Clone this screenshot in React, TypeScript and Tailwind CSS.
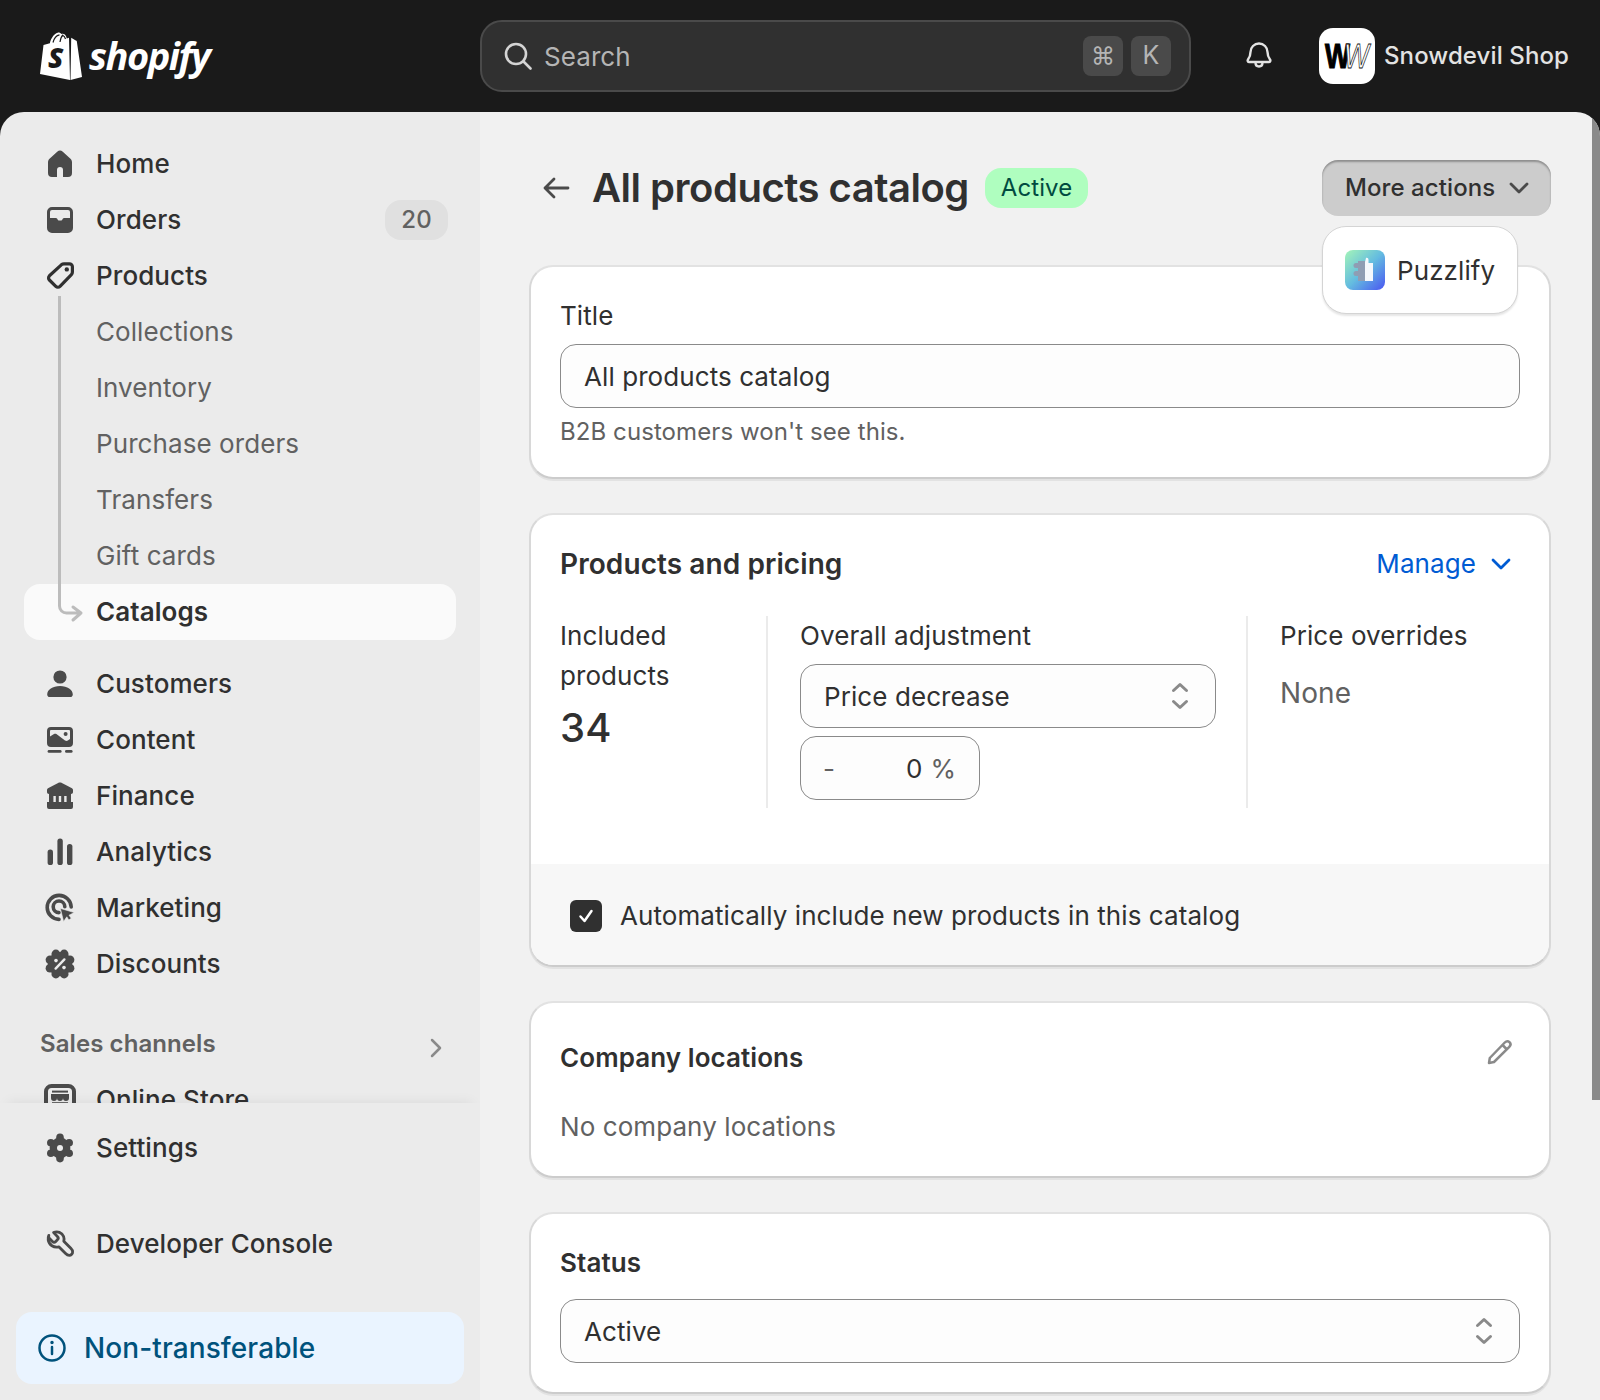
import type { ReactNode } from "react";

const font = { fontFamily: "Inter, 'Liberation Sans', sans-serif" };

function Icon({ children, className = "" }: { children: ReactNode; className?: string }) {
  return (
    <svg viewBox="0 0 20 20" className={`h-10 w-10 shrink-0 ${className}`} fill="#4a4a4a">
      {children}
    </svg>
  );
}

const HomeIcon = () => (
  <Icon>
    <path d="M4 9.200c0-.8.300-1.500.9-2l3.700-3.300a2 2 0 0 1 2.800 0l3.700 3.300c.6.500.9 1.200.9 2v5.300a2 2 0 0 1-2 2h-2.500V13a1.500 1.500 0 0 0-3 0v3.500H6a2 2 0 0 1-2-2z" />
  </Icon>
);

const OrdersIcon = () => (
  <Icon>
    <path
      fillRule="evenodd"
      d="M6 3.500h8A2.500 2.500 0 0 1 16.500 6v8a2.500 2.500 0 0 1-2.500 2.500H6A2.500 2.500 0 0 1 3.500 14V6A2.500 2.500 0 0 1 6 3.500zM6 5a1 1 0 0 0-1 1v3h2.800c.5 0 .8.300 1 .700.2.400.6.600 1.200.600s1-.2 1.200-.6c.2-.4.500-.7 1-.7H15V6a1 1 0 0 0-1-1z"
    />
  </Icon>
);

const ProductsIcon = () => (
  <Icon>
    <path
      d="M10.800 4.300Q11.300 3.900 12 3.900L14.700 3.900A1.500 1.500 0 0 1 16.200 5.400L16.200 8Q16.200 8.800 15.700 9.300L10 15.200A1.500 1.500 0 0 1 7.900 15.200L4.700 12A1.500 1.500 0 0 1 4.700 9.900Z"
      fill="none"
      stroke="#303030"
      strokeWidth="1.600"
      strokeLinejoin="round"
    />
    <circle cx="13.400" cy="6.700" r="1.100" fill="#303030" />
  </Icon>
);

const CustomersIcon = () => (
  <Icon>
    <circle cx="10" cy="6.500" r="3.300" />
    <path d="M3.600 15.200c0-2.400 2.700-4.200 6.400-4.200s6.400 1.800 6.400 4.200c0 .7-.5 1.300-1.200 1.300H4.800c-.7 0-1.200-.6-1.200-1.300z" />
  </Icon>
);

const ContentIcon = () => (
  <Icon>
    <path
      fillRule="evenodd"
      d="M5.500 3.500h9a2 2 0 0 1 2 2v6a2 2 0 0 1-2 2h-9a2 2 0 0 1-2-2v-6a2 2 0 0 1 2-2zM5 8.200l2-1.200c.4-.2.800-.2 1.200 0l4.300 3.200c.5.300 1 .3 1.400.1l1.100-.8V5.500a.5.500 0 0 0-.5-.5h-9a.5.500 0 0 0-.5.500z"
    />
    <circle cx="12.800" cy="7" r="1" />
    <rect x="3.800" y="15" width="7" height="1.400" rx=".7" />
    <rect x="12.500" y="15" width="3.800" height="1.400" rx=".7" />
  </Icon>
);

const FinanceIcon = () => (
  <Icon>
    <path d="M9.300 3.400c.4-.2 1-.2 1.400 0l5.300 2.700c.3.200.5.500.5.900v1c0 .6-.4 1-1 1H4.500c-.6 0-1-.4-1-1V7c0-.4.200-.7.500-.9z" />
    <path
      fillRule="evenodd"
      d="M4.500 8.500h11v4.500h1v2.500a1 1 0 0 1-1 1h-11a1 1 0 0 1-1-1V13h1zM6.700 10v3h1.200v-3zM9.400 10v3h1.200v-3zM12.100 10v3h1.200v-3z"
    />
  </Icon>
);

const AnalyticsIcon = () => (
  <Icon>
    <rect x="3.800" y="8.800" width="2.700" height="7.700" rx="1.300" />
    <rect x="8.700" y="3.300" width="2.700" height="13.200" rx="1.300" />
    <rect x="13.500" y="6" width="2.700" height="10.500" rx="1.300" />
  </Icon>
);

const MarketingIcon = () => (
  <Icon>
    <path
      d="M9.500 15.700a6 6 0 1 1 6.100-6.200M9.500 12.300a2.900 2.900 0 1 1 2.900-2.900"
      fill="none"
      stroke="#4a4a4a"
      strokeWidth="1.800"
      strokeLinecap="round"
    />
    <path d="M10.200 10.200l6.900 2.100-2.600 1.300 1.100 1.500-1.200.9-1-1.600-1.600 2.400z" stroke="#ebebeb" strokeWidth=".3" />
  </Icon>
);

const DiscountsIcon = () => (
  <Icon>
    {[0, 45, 90, 135, 180, 225, 270, 315].map((angle) => (
      <circle
        key={angle}
        cx={10 + 5.4 * Math.cos((angle * Math.PI) / 180 + Math.PI / 8)}
        cy={10 + 5.4 * Math.sin((angle * Math.PI) / 180 + Math.PI / 8)}
        r="2.200"
      />
    ))}
    <circle cx="10" cy="10" r="6" />
    <path d="M7.800 12.300l4.400-4.600" stroke="#ebebeb" strokeWidth="1.200" strokeLinecap="round" />
    <circle cx="8" cy="8.300" r=".9" fill="#ebebeb" />
    <circle cx="12" cy="11.800" r=".9" fill="#ebebeb" />
  </Icon>
);

const OnlineStoreIcon = () => (
  <Icon>
    <rect x="3" y="3" width="14" height="14" rx="2.800" fill="none" stroke="#4a4a4a" strokeWidth="2" />
    <path d="M5.500 7h9v2a1.500 1.500 0 0 1-3 0 1.500 1.500 0 0 1-3 0 1.500 1.500 0 0 1-3 0z" />
    <path d="M6 5.800h8" stroke="#4a4a4a" strokeWidth="1" />
    <path d="M6 11.800h8" stroke="#4a4a4a" strokeWidth="1.400" />
  </Icon>
);

const SettingsIcon = () => (
  <Icon>
    {[30, 90, 150, 210, 270, 330].map((angle) => (
      <circle key={angle} cx={10 + 5.3 * Math.cos((angle * Math.PI) / 180)} cy={10 + 5.3 * Math.sin((angle * Math.PI) / 180)} r="1.900" />
    ))}
    <circle cx="10" cy="10" r="5.200" />
    <circle cx="10" cy="10" r="1.500" fill="#ebebeb" />
  </Icon>
);

const WrenchIcon = () => (
  <Icon>
    <path
      d="M4.300 6.800 6.200 8.700c.5.500 1.200.5 1.700 0l.8-.8c.5-.5.5-1.200 0-1.700L6.800 4.300c1.900-.9 4.200-.1 5 1.900.3.800.3 1.600.1 2.400l3.500 3.500c.5.500.9 1.100.9 1.800a1.700 1.700 0 0 1-1.700 1.800c-.7 0-1.300-.4-1.800-.9l-3.400-3.400c-2.500.6-4.900-.9-5.300-3.400-.1-.8 0-1.600.3-2.300z"
      fill="none"
      stroke="#4a4a4a"
      strokeWidth="1.400"
      strokeLinejoin="round"
    />
  </Icon>
);

function Updown() {
  return (
    <svg viewBox="0 0 20 30" className="h-[30px] w-5" fill="none" stroke="#8a8a8a" strokeWidth="3" strokeLinecap="round" strokeLinejoin="round">
      <path d="M3.500 9.500 10 3.500l6.500 6M3.500 20.500l6.500 6 6.500-6" />
    </svg>
  );
}

function NavRow({ icon, label, right, active, muted, className = "" }: { icon?: ReactNode; label: string; right?: ReactNode; active?: boolean; muted?: boolean; className?: string }) {
  return (
    <div className={`mx-6 flex h-14 items-center gap-4 rounded-2xl pl-4 pr-2 text-[26px] tracking-[0.08px] ${active ? "bg-[#fafafa] font-semibold text-[#303030]" : muted ? "font-normal text-[#616161]" : "font-medium text-[#303030]"} ${className}`}>
      <div className="h-10 w-10 shrink-0">{icon}</div>
      <span className="flex-1 pb-0.5">{label}</span>
      {right}
    </div>
  );
}

function Logo() {
  return (
    <div className="flex items-center gap-[7px]">
      <svg viewBox="0 0 42 48" className="h-12 w-[42px]">
        <path d="M29 5.800 26.800 6.400C26 3 24.400 1.800 22.500 1.800c-.4 0-.8.100-1.200.300C20.300.700 19 .3 17.700.7 13.800 1.800 10.800 6.600 9.900 11.200L3.500 13.100 0 42l30 6z" fill="#fff" />
        <path d="M31.200 5.700 30.500 48l11.500-3L36.800 9.300c-.1-.5-.5-.8-1-.8z" fill="#fff" />
        <path d="M13 10.500C14 6.500 16.500 3.300 19.500 2.800M20 10c.5-3.500 1.800-6 3.200-7.200M25.500 7C25 5 24 3.800 22.800 3.500" fill="none" stroke="#1a1a1a" strokeWidth="1.200" />
        <text x="8" y="36" fontFamily="'Open Sans', sans-serif" fontSize="28" fontWeight="800" fontStyle="italic" fill="#1a1a1a">S</text>
      </svg>
      <span className="-mt-0.5 text-[38px] font-bold italic leading-none tracking-[-1.5px] text-white" style={{ fontFamily: "'Open Sans', sans-serif" }}>
        shopify
      </span>
    </div>
  );
}

function ShopMark() {
  return (
    <svg viewBox="0 0 56 56" className="h-14 w-14 shrink-0 rounded-[14px] bg-white">
      <text x="6" y="40" textLength="25" lengthAdjust="spacingAndGlyphs" fontFamily="'Liberation Sans', sans-serif" fontSize="35" fontWeight="900" fill="#000" stroke="#000" strokeWidth="1.200">W</text>
      <text x="25" y="40" textLength="25" lengthAdjust="spacingAndGlyphs" fontFamily="'Liberation Sans', sans-serif" fontSize="35" fontStyle="italic" fill="#fff" stroke="#111" strokeWidth=".8">W</text>
    </svg>
  );
}

function Puzzlify() {
  return (
    <svg viewBox="0 0 40 40" className="h-10 w-10 shrink-0 rounded-lg">
      <defs>
        <linearGradient id="pz" x1="0" y1="0" x2="1" y2="1">
          <stop offset="0" stopColor="#a4f5b8" />
          <stop offset=".5" stopColor="#64bce0" />
          <stop offset="1" stopColor="#4a55f2" />
        </linearGradient>
      </defs>
      <rect width="40" height="40" fill="url(#pz)" />
      <path d="M13 11h7v20h-7v-5h-2a2.500 2.500 0 0 1 0-5h2v-3h-2a2.500 2.500 0 0 1 0-5h2z" fill="#8f9db3" />
      <path d="M20 12l1-4c1.500-.5 2.500.5 2.500 2v3H28v18h-8z" fill="#f5f8fc" />
    </svg>
  );
}

function Card({ children, className = "" }: { children: ReactNode; className?: string }) {
  return <section className={`overflow-hidden rounded-3xl border-2 border-[#d8d8d8] border-t-[#e2e2e2] border-b-[#cccccc] bg-white shadow-[0_2px_0_rgba(0,0,0,0.06)] ${className}`}>{children}</section>;
}

function Sidebar() {
  return (
    <aside className="flex w-[480px] shrink-0 flex-col overflow-hidden rounded-tl-3xl bg-[#ebebeb]">
      <div className="h-[991px] overflow-hidden pt-6">
        <NavRow icon={<HomeIcon />} label="Home" />
        <NavRow
          icon={<OrdersIcon />}
          label="Orders"
          right={<span className="flex h-10 w-[63px] items-center justify-center rounded-2xl bg-[#e0e0e0] text-[24px] font-medium text-[#616161]">20</span>}
        />
        <NavRow icon={<ProductsIcon />} label="Products" />
        <div className="relative">
          <div className="absolute left-[58px] top-[-8px] z-10 h-[306px] w-[3px] bg-[#bcbcbc]" />
          <NavRow label="Collections" muted />
          <NavRow label="Inventory" muted />
          <NavRow label="Purchase orders" muted />
          <NavRow label="Transfers" muted />
          <NavRow label="Gift cards" muted />
          <NavRow
            active
            label="Catalogs"
            icon={
              <svg viewBox="0 0 40 40" className="h-10 w-10 overflow-visible" fill="none" stroke="#bcbcbc" strokeWidth="3" strokeLinecap="round" strokeLinejoin="round">
                <path d="M19.500 6v8a7 7 0 0 0 7 7H41M33 15l8 6-8 7" />
              </svg>
            }
          />
        </div>
        <NavRow icon={<CustomersIcon />} label="Customers" className="mt-4" />
        <NavRow icon={<ContentIcon />} label="Content" />
        <NavRow icon={<FinanceIcon />} label="Finance" />
        <NavRow icon={<AnalyticsIcon />} label="Analytics" />
        <NavRow icon={<MarketingIcon />} label="Marketing" />
        <NavRow icon={<DiscountsIcon />} label="Discounts" />
        <div className="mt-6 flex h-14 items-center justify-between pl-10 pr-[37px]">
          <span className="text-[24px] font-semibold tracking-[0.08px] text-[#616161]">Sales channels</span>
          <svg viewBox="0 0 14 22" className="mt-2 h-[22px] w-[14px]" fill="none" stroke="#8a8a8a" strokeWidth="2.500" strokeLinecap="round" strokeLinejoin="round">
            <path d="M3 3l8 8-8 8" />
          </svg>
        </div>
        <NavRow icon={<OnlineStoreIcon />} label="Online Store" />
      </div>
      <div className="relative flex-1 pt-[17px] shadow-[0_-8px_12px_-8px_rgba(0,0,0,0.08)]">
        <NavRow icon={<SettingsIcon />} label="Settings" />
        <NavRow icon={<WrenchIcon />} label="Developer Console" className="mt-10" />
        <div className="mx-4 mt-10 flex h-[72px] items-center gap-[18px] rounded-2xl bg-[#eaf4ff] pl-[22px] text-[28px] font-medium tracking-[0.1px] text-[#00527c]">
          <svg viewBox="0 0 28 28" className="h-7 w-7 shrink-0" fill="none" stroke="#00527c" strokeWidth="2.500" strokeLinecap="round">
            <circle cx="14" cy="14" r="12.500" />
            <path d="M14 13v7" />
            <circle cx="14" cy="8.500" r="1" fill="#00527c" strokeWidth="1.500" />
          </svg>
          Non-transferable
        </div>
      </div>
    </aside>
  );
}

function Main() {
  return (
    <main className="relative flex-1 overflow-hidden rounded-tr-3xl bg-[#f1f1f1] pl-[49px] pr-[49px] pt-12">
      <div className="absolute right-0 top-0 h-[988px] w-2 bg-[#8a8a8a]" />
      <div className="relative mb-[49px] flex h-14 items-center">
        <svg viewBox="0 0 28 24" className="ml-[13px] h-6 w-7" fill="none" stroke="#4a4a4a" strokeWidth="2.800" strokeLinecap="round" strokeLinejoin="round">
          <path d="M26 12H3M12 3l-9 9 9 9" />
        </svg>
        <h1 className="ml-[22px] text-[40px] font-semibold leading-none tracking-[-0.5px] text-[#303030]">All products catalog</h1>
        <span className="ml-4 flex h-10 items-center rounded-2xl bg-[#affebf] px-4 text-[24px] tracking-[0.08px] text-[#014b40]">Active</span>
        <button className="ml-auto flex h-14 w-[229px] items-center justify-between rounded-2xl bg-[#cccccc] pl-[23px] pr-[22px] text-[24px] font-medium tracking-[0.08px] text-[#303030] shadow-[inset_0_2px_2px_rgba(0,0,0,0.3)]">
          More actions
          <svg viewBox="0 0 20 12" className="h-3 w-5" fill="none" stroke="#4a4a4a" strokeWidth="2.800" strokeLinecap="round" strokeLinejoin="round">
            <path d="M2 2l8 8 8-8" />
          </svg>
        </button>
        <div className="absolute right-[33px] top-[66px] z-10 flex h-[88px] w-[196px] items-center gap-3 rounded-3xl border border-[#d4d4d4] bg-white pl-[22px] text-[26px] tracking-[0.08px] text-[#303030] shadow-[0_2px_2px_rgba(0,0,0,0.1)]">
          <Puzzlify />
          Puzzlify
        </div>
      </div>

      <div className="flex flex-col gap-[34px] text-[26px] tracking-[0.08px] text-[#303030]">
        <Card className="h-[214px] px-[29px] pt-[29px]">
          <div className="h-10 leading-10">Title</div>
          <div className="mt-2 flex h-16 items-center rounded-2xl border border-[#8a8a8a] bg-[#fdfdfd] px-[23px]">All products catalog</div>
          <div className="mt-1 h-10 text-[24px] leading-10 text-[#616161]">B2B customers won't see this.</div>
        </Card>

        <Card className="h-[454px]">
          <div className="flex h-[101px] items-start justify-between pl-[29px] pr-[38px] pt-[29px]">
            <h2 className="text-[28px] font-semibold leading-10">Products and pricing</h2>
            <div className="flex items-center gap-[15px] leading-10 text-[#005bd3]">
              Manage
              <svg viewBox="0 0 20 12" className="h-3 w-5" fill="none" stroke="#005bd3" strokeWidth="2.800" strokeLinecap="round" strokeLinejoin="round">
                <path d="M2 2l8 8 8-8" />
              </svg>
            </div>
          </div>
          <div className="flex h-[192px] pl-[29px]">
            <div className="w-[208px] shrink-0 border-r-2 border-[#ebebeb] leading-10">
              Included
              <br />
              products
              <div className="mt-1 text-[40px] font-medium leading-[56px]">34</div>
            </div>
            <div className="w-[480px] shrink-0 border-r-2 border-[#ebebeb] pl-8 pr-[30px]">
              <div className="h-10 leading-10">Overall adjustment</div>
              <div className="mt-2 flex h-16 items-center justify-between rounded-2xl border border-[#8a8a8a] bg-[#fdfdfd] pl-[23px] pr-[25px]">
                <span>Price decrease</span>
                <Updown />
              </div>
              <div className="mt-2 flex h-16 w-[180px] items-center rounded-2xl border border-[#8a8a8a] bg-[#fdfdfd] pl-[22px] pr-[23px]">
                <span className="text-[#616161]">-</span>
                <span className="ml-auto">0</span>
                <span className="ml-2 text-[#616161]">%</span>
              </div>
            </div>
            <div className="pl-8">
              <div className="h-10 leading-10">Price overrides</div>
              <div className="mt-4 pt-px text-[28px] leading-10 text-[#616161]">None</div>
            </div>
          </div>
          <div className="mt-[56px] flex h-[101px] items-center gap-[18px] bg-[#f7f7f7] pl-[39px] pt-0.5">
            <span className="flex h-8 w-8 items-center justify-center rounded-md bg-[#303030]">
              <svg viewBox="0 0 20 20" className="h-5 w-5" fill="none" stroke="#fff" strokeWidth="2.500" strokeLinecap="round" strokeLinejoin="round">
                <path d="M4.500 10.500l4 4.500 7-10" />
              </svg>
            </span>
            Automatically include new products in this catalog
          </div>
        </Card>

        <Card className="h-[177px] px-[29px] pt-[35px]">
          <div className="flex h-10 items-center justify-between pr-[6px]">
            <h2 className="text-[26px] font-semibold leading-10">Company locations</h2>
            <svg viewBox="0 0 28 28" className="-mt-3 h-7 w-7" fill="none" stroke="#8a8a8a" strokeWidth="2.500" strokeLinejoin="round">
              <path d="M3 25l.8-5L18.800 4.500c1.500-1.500 3.400-1.500 4.700-.3 1.300 1.300 1.300 3.200-.2 4.700L8 24zM16.500 7l4.500 4.500" />
            </svg>
          </div>
          <div className="mt-[29px] leading-10 text-[#616161]">No company locations</div>
        </Card>

        <Card className="h-[182px] px-[29px] pt-[29px]">
          <h2 className="h-10 text-[26px] font-semibold leading-10">Status</h2>
          <div className="mt-4 flex h-16 items-center justify-between rounded-2xl border border-[#8a8a8a] bg-[#fdfdfd] pl-[23px] pr-[25px]">
            Active
            <Updown />
          </div>
        </Card>
      </div>
    </main>
  );
}

export default function App() {
  return (
    <div className="flex h-[1400px] w-[1600px] flex-col overflow-hidden bg-[#1a1a1a]" style={font}>
      <header className="flex h-28 shrink-0 items-center">
        <div className="w-[480px] shrink-0 pl-10">
          <Logo />
        </div>
        <div className="flex h-[72px] w-[711px] items-center rounded-[22px] border-2 border-[#4a4a4a] bg-[#303030] pl-[22px] pr-[18px] text-[26px] tracking-[0.08px] text-[#b5b5b5]">
          <svg viewBox="0 0 28 28" className="mr-3 h-7 w-7" fill="none" stroke="#d4d4d4" strokeWidth="2.600" strokeLinecap="round">
            <circle cx="12" cy="12" r="10" />
            <path d="M20 20l6.500 6.500" />
          </svg>
          Search
          <span className="ml-auto flex h-10 w-10 items-center justify-center rounded-lg bg-[#4a4a4a] text-[24px]">⌘</span>
          <span className="ml-2 flex h-10 w-10 items-center justify-center rounded-lg bg-[#4a4a4a] text-[25px]">K</span>
        </div>
        <svg viewBox="0 0 28 30" className="ml-[54px] h-[30px] w-7" fill="none" stroke="#e3e3e3" strokeWidth="2.400" strokeLinecap="round" strokeLinejoin="round">
          <path d="M5.500 11a8.500 8.500 0 0 1 17 0c0 3.500 1 5.500 2.500 7.500.8 1.100.2 2.500-1.200 2.500H4.200C2.800 21 2.200 19.600 3 18.500 4.500 16.500 5.500 14.500 5.500 11zM10.500 21.500c0 2.500 1.500 4 3.500 4s3.500-1.500 3.500-4" />
        </svg>
        <div className="ml-[46px] flex items-center gap-[9px]">
          <ShopMark />
          <span className="text-[24px] font-medium tracking-[0.1px] text-[#e3e3e3]">Snowdevil Shop</span>
        </div>
      </header>
      <div className="flex min-h-0 flex-1">
        <Sidebar />
        <Main />
      </div>
    </div>
  );
}
